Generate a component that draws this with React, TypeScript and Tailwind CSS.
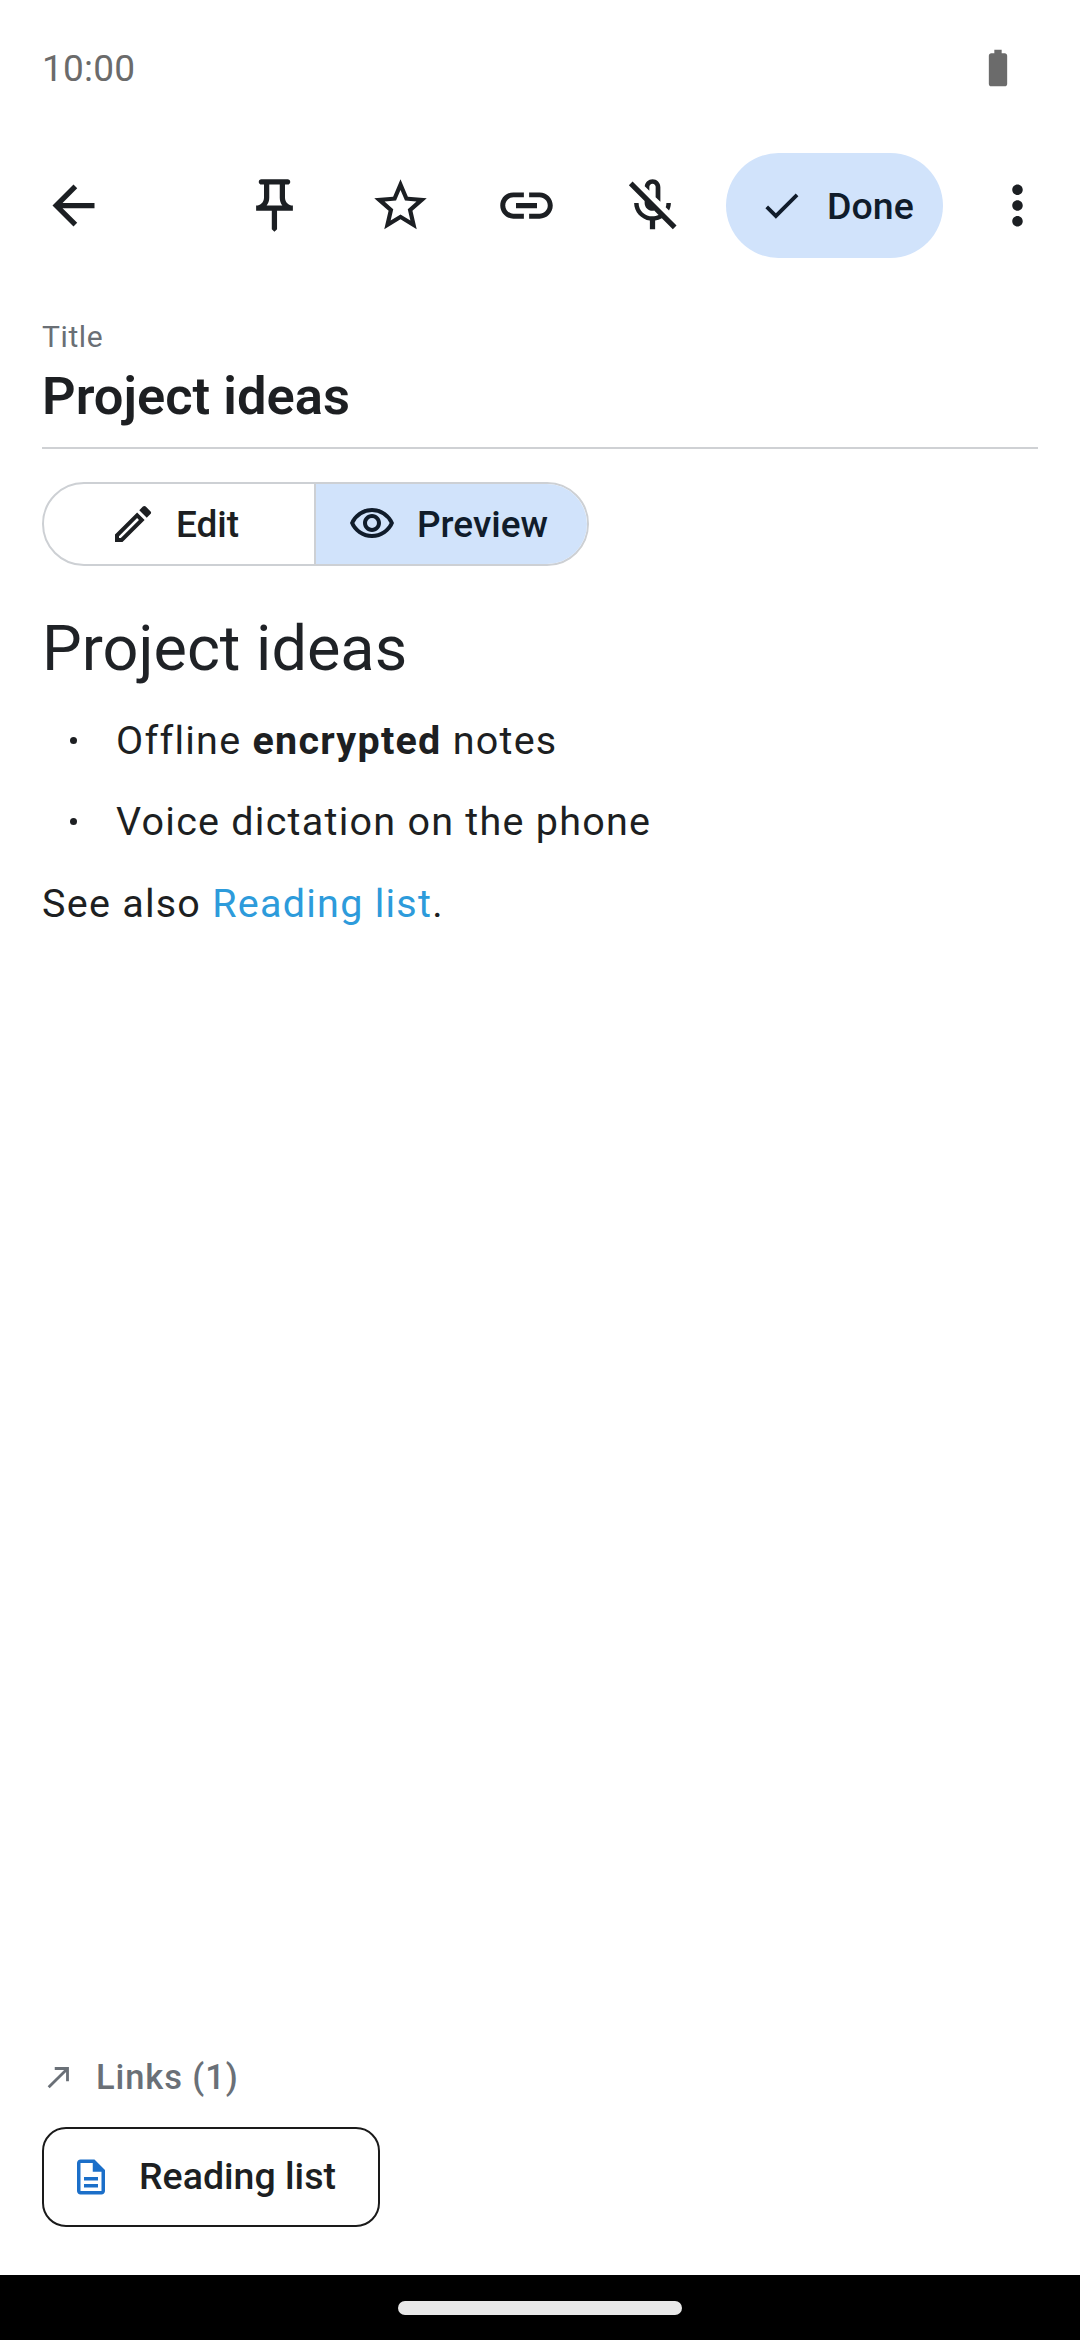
import React from "react";
import {
  MdArrowBack,
  MdOutlinePushPin,
  MdStarBorder,
  MdLink,
  MdOutlineMicOff,
  MdCheck,
  MdMoreVert,
  MdOutlineEdit,
  MdOutlineVisibility,
  MdOutlineDescription,
  MdBatteryFull,
  MdNorthEast,
} from "react-icons/md";

function IconButton({ children }: { children: React.ReactNode }) {
  return <div className="flex h-[126px] w-[126px] items-center justify-center text-[#1c1f23]">{children}</div>;
}

export default function App() {
  return (
    <div className="flex h-[2340px] w-[1080px] flex-col overflow-hidden bg-white font-['Roboto',sans-serif] text-[#1d1f22]">
      <div className="flex h-[142px] items-center justify-between pl-[42px] pr-[60px] pb-[6px]">
        <span className="text-[37px] leading-none tracking-[0.2px] text-[#6b6b6b]">10:00</span>
        <MdBatteryFull size={44} className="text-[#6b6b6b]" />
      </div>

      <div className="flex h-[126px] items-center pl-[10px]">
        <IconButton><MdArrowBack size={63} /></IconButton>
        <div className="w-[75px]" />
        <IconButton><MdOutlinePushPin size={63} /></IconButton>
        <IconButton><MdStarBorder size={63} /></IconButton>
        <IconButton><MdLink size={63} /></IconButton>
        <IconButton><MdOutlineMicOff size={63} /></IconButton>
        <div className="ml-[11px] flex h-[105px] w-[217px] items-center gap-[23px] rounded-full bg-[#d1e3fb] pl-[33px] text-[#101c2b]">
          <MdCheck size={45} />
          <span className="pt-[4px] text-[37.5px] font-medium leading-none">Done</span>
        </div>
        <div className="ml-[11px]"><IconButton><MdMoreVert size={63} /></IconButton></div>
      </div>

      <div className="px-[42px] pt-[50px]">
        <div className="text-[30px] leading-[38px] tracking-[0.6px] text-[#6a6f75]">Title</div>
        <div className="border-b-2 border-[#cfd1d4] pb-[20px] pt-[9px] text-[52.5px] font-semibold leading-[62px]">Project ideas</div>

        <div className="mt-[33px] flex h-[84px] w-[547px] overflow-hidden rounded-full border-2 border-[#cdd0d4]">
          <div className="flex w-[270px] items-center justify-center gap-[19px] pr-[10px] text-[#1d1f22]">
            <MdOutlineEdit size={48} />
            <span className="text-[37px] font-medium leading-none">Edit</span>
          </div>
          <div className="flex flex-1 items-center justify-center gap-[21px] border-l-2 border-[#cdd0d4] bg-[#d1e3fb] pr-[7px] text-[#101c2b]">
            <MdOutlineVisibility size={48} />
            <span className="text-[37px] font-medium leading-none">Preview</span>
          </div>
        </div>

        <h1 className="mt-[47px] text-[63px] font-normal leading-[72px] text-[#1f2226]">Project ideas</h1>

        <ul className="mt-[24px] flex flex-col gap-[18px] text-[39.5px] leading-[63px] tracking-[1.25px]">
          <li className="flex items-center">
            <span className="mr-[26px] ml-[28px] h-[7px] w-[7px] rounded-full bg-[#1d1f22]" />
            <span className="ml-[13px]">Offline <b className="font-bold">encrypted</b> notes</span>
          </li>
          <li className="flex items-center">
            <span className="mr-[26px] ml-[28px] h-[7px] w-[7px] rounded-full bg-[#1d1f22]" />
            <span className="ml-[13px]">Voice dictation on the phone</span>
          </li>
        </ul>
        <p className="mt-[19px] text-[39.5px] leading-[63px] tracking-[1.25px]">
          See also <span className="text-[#2d9bdb]">Reading list</span>.
        </p>
      </div>

      <div className="flex-1" />

      <div className="px-[42px] pb-[48px]">
        <div className="flex items-center gap-[20px] text-[#6a7077]">
          <MdNorthEast size={34} />
          <span className="text-[34.5px] font-medium leading-[44px] tracking-[0.9px]">Links (1)</span>
        </div>
        <div className="mt-[28px] flex h-[100px] w-[338px] items-center gap-[27px] rounded-[24px] border-2 border-[#1a1a1a] pl-[26px]">
          <MdOutlineDescription size={42} className="text-[#1b6fc9]" />
          <span className="text-[37.5px] font-medium leading-none">Reading list</span>
        </div>
      </div>

      <div className="flex h-[65px] items-center justify-center bg-black">
        <div className="h-[14px] w-[284px] rounded-full bg-[#e8e8e8]" />
      </div>
    </div>
  );
}
